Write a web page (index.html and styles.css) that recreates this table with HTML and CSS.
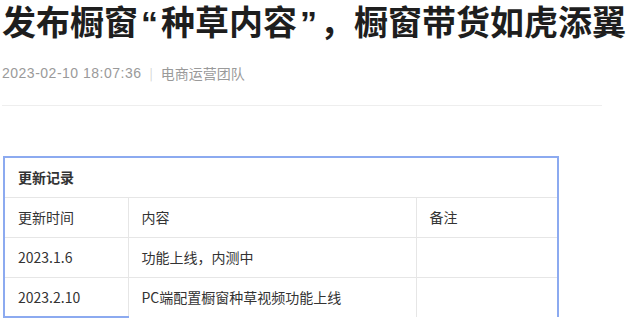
FILE: index.html
```html
<!DOCTYPE html>
<html lang="zh-CN">
<head>
<meta charset="utf-8">
<link rel="stylesheet" href="styles.css">
</head>
<body>
<div class="article">
  <h1 class="title">发布橱窗<span class="q">“</span>种草内容<span class="q">”</span>，橱窗带货如虎添翼</h1>
  <div class="meta"><span class="date">2023-02-10 18:07:36</span><span class="sep">|</span><span class="author">电商运营团队</span></div>
  <div class="divider"></div>
  <table class="log">
    <tr><td class="caption" colspan="3">更新记录</td></tr>
    <tr><td class="c1">更新时间</td><td class="c2">内容</td><td class="c3">备注</td></tr>
    <tr><td class="c1">2023.1.6</td><td class="c2">功能上线，内测中</td><td class="c3"></td></tr>
    <tr class="last"><td class="c1">2023.2.10</td><td class="c2">PC端配置橱窗种草视频功能上线</td><td class="c3"></td></tr>
  </table>
</div>
</body>
</html>
```
FILE: styles.css
```css
html, body {
  margin: 0;
  padding: 0;
  background: #fff;
}
body {
  font-family: "Noto Sans CJK SC", "Noto Sans", sans-serif;
  color: #333;
}
.article {
  padding: 0 0 0 2px;
}
.title {
  margin: -2px 0 0 0;
  font-size: 34px;
  line-height: 46px;
  font-weight: 700;
  color: #1e1e1e;
  white-space: nowrap;
}
.title .q {
  font-family: "Liberation Sans", sans-serif;
  font-weight: 700;
  padding: 0 3px;
}
.meta {
  margin-top: 17px;
  font-size: 14px;
  line-height: 20px;
  color: #9a9a9a;
  display: flex;
  align-items: center;
}
.date {
  font-family: "Liberation Sans", sans-serif;
  font-size: 14px;
  letter-spacing: 0.5px;
}
.sep {
  color: #d0d0d0;
  margin: 0 8px;
  font-size: 12px;
}
.divider {
  margin-top: 22px;
  height: 1px;
  width: 600px;
  background: #eeeeee;
}
.log {
  margin-top: 50px;
  margin-left: 1px;
  border-collapse: collapse;
  width: 556px;
  font-size: 14px;
  color: #333;
  border-top: 2px solid #8caaf0;
  border-left: 2px solid #8caaf0;
  border-right: 2px solid #8caaf0;
}
.log td {
  border: 1px solid #e6e6e6;
  height: 40px;
  padding: 0 0 0 13px;
  box-sizing: border-box;
  text-align: left;
}
.log td.caption {
  font-weight: 700;
  border-top: 2px solid #8caaf0;
}
.log .c1 { width: 124px; border-left: 2px solid #8caaf0; }
.log .c2 { width: 288px; }
.log .c3 { border-right: 2px solid #8caaf0; }
.log .last td { border-bottom: none; }
.log .last td.c1 { border-bottom: 2px solid #8caaf0; }
```
